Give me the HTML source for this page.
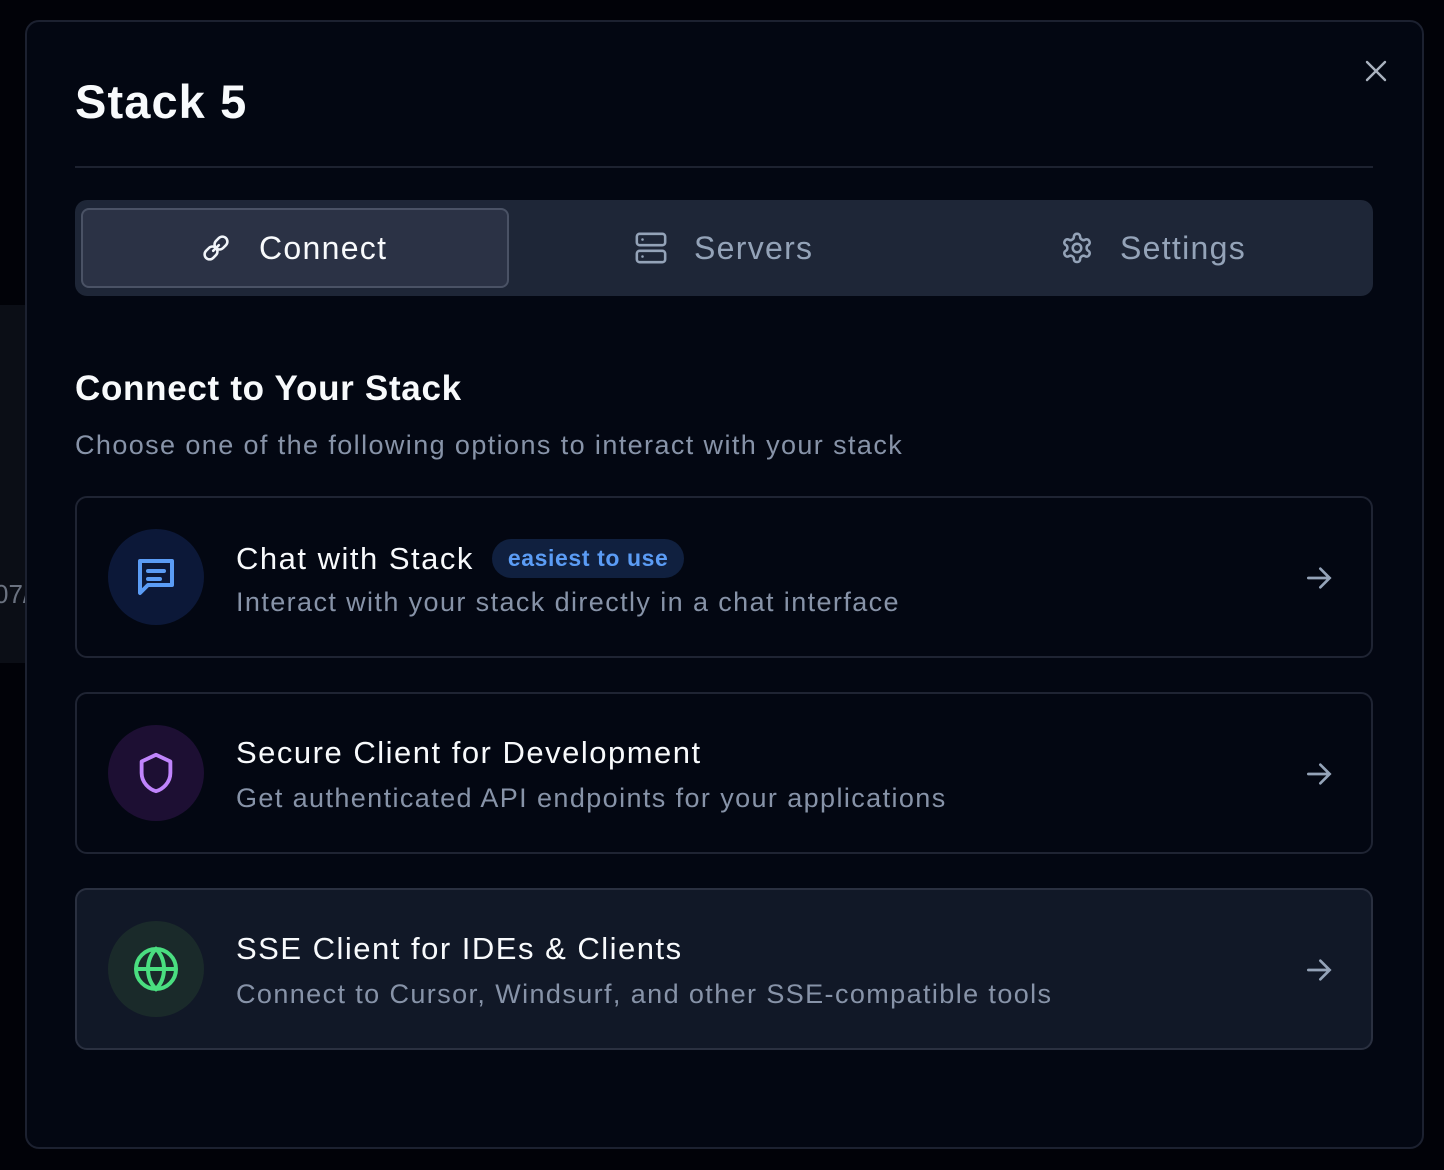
<!DOCTYPE html>
<html><head><style>
*{box-sizing:border-box;margin:0;padding:0}
body{width:1444px;height:1170px;background:#010208;font-family:"Liberation Sans",sans-serif;position:relative;overflow:hidden}
.strip{position:absolute;left:0;top:305px;width:30px;height:358px;background:#0b0e16;color:#6b7280;font-size:26px}
.modal{position:absolute;left:25px;top:20px;width:1399px;height:1129px;background:#030712;border:2px solid #1c2130;border-radius:14px}
.t{position:absolute;color:#f8fafc}
.div{position:absolute;left:48px;top:144px;width:1298px;height:2px;background:#1d2230}
.tabs{position:absolute;left:48px;top:178px;width:1298px;height:96px;background:#1e2637;border-radius:12px}
.act{position:absolute;left:6px;top:8px;width:428px;height:80px;background:#2b3245;border:2px solid #4a5265;border-radius:8px}
.tab{position:absolute;top:0;height:96px;display:flex;align-items:center;gap:26px;font-size:32px;color:#94a3b8;letter-spacing:1.3px}
.card{position:absolute;left:48px;width:1298px;height:162px;border:2px solid #1f2433;border-radius:12px}
.ic{position:absolute;left:31px;top:31px;width:96px;height:96px;border-radius:50%;display:flex;align-items:center;justify-content:center}
.ct{position:absolute;left:159px;top:41px;font-size:31px;color:#f8fafc;display:flex;align-items:center;letter-spacing:1.5px}
.cs{position:absolute;left:159px;top:89px;font-size:27px;color:#8793a8;letter-spacing:1.4px}
.arr{position:absolute;right:36px;top:64px}
.badge{margin-left:18px;background:#10203f;color:#5b9cf5;font-weight:bold;font-size:23px;padding:6px 16px;border-radius:20px;letter-spacing:0.6px}
</style></head><body>
<div class="strip"><span style="position:absolute;top:274px;left:-6px">07/</span></div>
<div class="modal">
<div class="t" style="left:48px;top:52px;font-size:47px;font-weight:bold;letter-spacing:1.1px">Stack 5</div>
<svg style="position:absolute;left:1338px;top:38px" width="22" height="22" viewBox="0 0 22 22" stroke="#aab2bf" stroke-width="2.4" stroke-linecap="round"><path d="M2 2L20 20M20 2L2 20"/></svg>
<div class="div"></div>
<div class="tabs">
<div class="act"></div>
<div class="tab" style="left:124px;color:#f8fafc">
<svg width="34" height="34" viewBox="0 0 24 24" fill="none" stroke="#f1f5f9" stroke-width="1.8" stroke-linecap="round"><path d="M10 14l4-4"/><path d="M12 7l2-2a3 3 0 0 1 5 5l-2 2a3 3 0 0 1-5-5"/><path d="M12 17l-2 2a3 3 0 0 1-5-5l2-2a3 3 0 0 1 5 5"/></svg>Connect</div>
<div class="tab" style="left:559px">
<svg width="34" height="34" viewBox="0 0 24 24" fill="none" stroke="#94a3b8" stroke-width="1.8" stroke-linecap="round"><rect x="2" y="2" width="20" height="8" rx="2"/><rect x="2" y="14" width="20" height="8" rx="2"/><path d="M6 6h.01M6 18h.01"/></svg>Servers</div>
<div class="tab" style="left:985px">
<svg width="34" height="34" viewBox="0 0 24 24" fill="none" stroke="#94a3b8" stroke-width="1.8" stroke-linejoin="round"><path d="M12.2 2h-.4a2 2 0 0 0-2 2v.2a2 2 0 0 1-1 1.7l-.4.3a2 2 0 0 1-2 0l-.2-.1a2 2 0 0 0-2.7.7l-.2.4a2 2 0 0 0 .7 2.7l.2.1a2 2 0 0 1 1 1.7v.5a2 2 0 0 1-1 1.7l-.2.1a2 2 0 0 0-.7 2.7l.2.4a2 2 0 0 0 2.7.7l.2-.1a2 2 0 0 1 2 0l.4.3a2 2 0 0 1 1 1.7v.2a2 2 0 0 0 2 2h.4a2 2 0 0 0 2-2v-.2a2 2 0 0 1 1-1.7l.4-.3a2 2 0 0 1 2 0l.2.1a2 2 0 0 0 2.7-.7l.2-.4a2 2 0 0 0-.7-2.7l-.2-.1a2 2 0 0 1-1-1.7v-.5a2 2 0 0 1 1-1.7l.2-.1a2 2 0 0 0 .7-2.7l-.2-.4a2 2 0 0 0-2.7-.7l-.2.1a2 2 0 0 1-2 0l-.4-.3a2 2 0 0 1-1-1.7V4a2 2 0 0 0-2-2z"/><circle cx="12" cy="12" r="3"/></svg>Settings</div>
</div>
<div class="t" style="left:48px;top:347px;font-size:35px;font-weight:bold;letter-spacing:0.7px">Connect to Your Stack</div>
<div class="t" style="left:48px;top:408px;font-size:27px;color:#8793a8;letter-spacing:1.4px">Choose one of the following options to interact with your stack</div>

<div class="card" style="top:474px">
<div class="ic" style="background:#0c1838"><svg width="48" height="48" viewBox="0 0 24 24" fill="none" stroke="#5b9cf5" stroke-width="2" stroke-linecap="round" stroke-linejoin="round"><path d="M4 4h16v12H8l-4 4z"/><path d="M8 9h8M8 13h6"/></svg></div>
<div class="ct">Chat with Stack<span class="badge">easiest to use</span></div>
<div class="cs">Interact with your stack directly in a chat interface</div>
<svg class="arr" width="32" height="32" viewBox="0 0 24 24" fill="none" stroke="#94a3b8" stroke-width="2" stroke-linecap="round"><path d="M4 12h16M13 5l7 7-7 7"/></svg>
</div>
<div class="card" style="top:670px">
<div class="ic" style="background:#1d0f33"><svg width="46" height="46" viewBox="0 0 24 24" fill="none" stroke="#c084fc" stroke-width="2" stroke-linejoin="round"><path d="M12 2.5l7.5 3.5v6c0 5-4 8.5-7.5 9.5C8.5 20.5 4.5 17 4.5 12V6z"/></svg></div>
<div class="ct">Secure Client for Development</div>
<div class="cs">Get authenticated API endpoints for your applications</div>
<svg class="arr" width="32" height="32" viewBox="0 0 24 24" fill="none" stroke="#94a3b8" stroke-width="2" stroke-linecap="round"><path d="M4 12h16M13 5l7 7-7 7"/></svg>
</div>
<div class="card" style="top:866px;background:#111827;border-color:#2a3040">
<div class="ic" style="background:#1a2a2a"><svg width="48" height="48" viewBox="0 0 24 24" fill="none" stroke="#4ade80" stroke-width="2"><circle cx="12" cy="12" r="10"/><path d="M2 12h20M12 2c-3 3-4 6.5-4 10s1 7 4 10c3-3 4-6.5 4-10s-1-7-4-10z"/></svg></div>
<div class="ct">SSE Client for IDEs &amp; Clients</div>
<div class="cs">Connect to Cursor, Windsurf, and other SSE-compatible tools</div>
<svg class="arr" width="32" height="32" viewBox="0 0 24 24" fill="none" stroke="#94a3b8" stroke-width="2" stroke-linecap="round"><path d="M4 12h16M13 5l7 7-7 7"/></svg>
</div>
</div>
</body></html>
